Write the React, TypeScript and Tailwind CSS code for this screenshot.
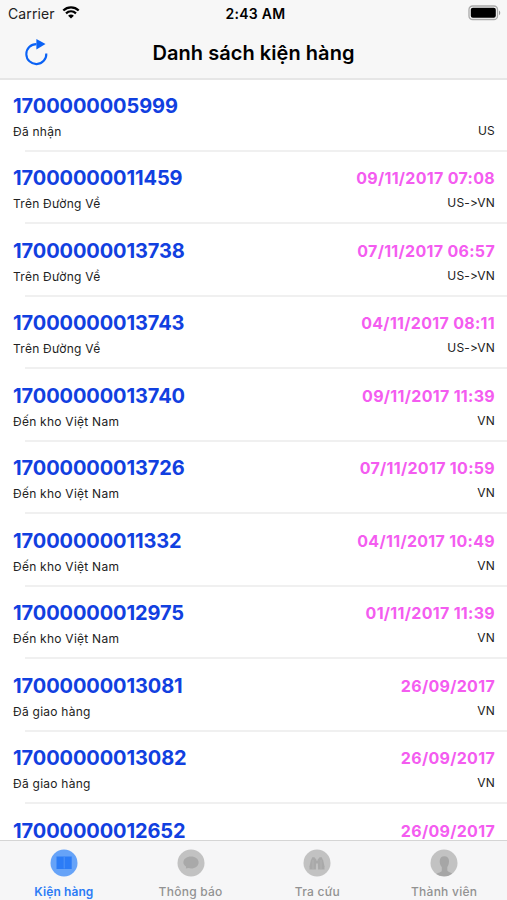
interface Parcel {
  code: string;
  status?: string;
  date?: string;
  route?: string;
}

const parcels: Parcel[] = [
  { code: "1700000005999", status: "Đã nhận", route: "US" },
  { code: "17000000011459", status: "Trên Đường Về", date: "09/11/2017 07:08", route: "US->VN" },
  { code: "17000000013738", status: "Trên Đường Về", date: "07/11/2017 06:57", route: "US->VN" },
  { code: "17000000013743", status: "Trên Đường Về", date: "04/11/2017 08:11", route: "US->VN" },
  { code: "17000000013740", status: "Đến kho Việt Nam", date: "09/11/2017 11:39", route: "VN" },
  { code: "17000000013726", status: "Đến kho Việt Nam", date: "07/11/2017 10:59", route: "VN" },
  { code: "17000000011332", status: "Đến kho Việt Nam", date: "04/11/2017 10:49", route: "VN" },
  { code: "17000000012975", status: "Đến kho Việt Nam", date: "01/11/2017 11:39", route: "VN" },
  { code: "17000000013081", status: "Đã giao hàng", date: "26/09/2017", route: "VN" },
  { code: "17000000013082", status: "Đã giao hàng", date: "26/09/2017", route: "VN" },
  { code: "17000000012652", date: "26/09/2017" },
];

const tabs = [
  { label: "Kiện hàng", icon: "book" },
  { label: "Thông báo", icon: "chat" },
  { label: "Tra cứu", icon: "search" },
  { label: "Thành viên", icon: "user" },
];

const StatusBar = () => (
  <div className="h-7 shrink-0 grid grid-cols-3 items-center pl-2 pr-1.5 text-[14px]">
    <div className="flex items-center gap-[7px] -mt-0.5 text-[#222]">
      <span className="tracking-[0.1px]">Carrier</span>
      <svg className="-mt-px" width="18" height="13" viewBox="0 0 18 13" fill="none">
        <path d="M1.3 4.5C5.7.3 12.3.3 16.7 4.5" stroke="#000" strokeWidth="2.3" />
        <path d="M4 7.4c2.9-2.7 7.1-2.7 10 0" stroke="#000" strokeWidth="2.2" />
        <path d="M9 12.6 6.1 9.7c1.7-1.5 4.1-1.5 5.8 0z" fill="#000" />
      </svg>
    </div>
    <div className="pl-0.5 -mt-0.5 text-center font-semibold tracking-[0.3px] text-black">2:43 AM</div>
    <div className="flex justify-end -mt-0.5">
      <svg width="33" height="16" viewBox="0 0 33 16">
        <rect x="1" y="1" width="28.5" height="13.5" rx="3.6" fill="#f7f7f7" stroke="#aaa" strokeWidth="1.3" />
        <rect x="2.8" y="2.8" width="25" height="10" rx="2" fill="#000" />
        <path d="M31 5.5c1.7.8 1.7 3.9 0 4.7z" fill="#999" />
      </svg>
    </div>
  </div>
);

const Header = () => (
  <div className="h-[52px] shrink-0 grid grid-cols-[60px_1fr_60px] items-center border-b-2 border-[#e6e6e6]">
    <svg className="ml-6 -mt-0.5" width="25" height="28" viewBox="0 0 25 28" fill="none">
      <path d="M12.4 6.1A10 10 0 1 0 22.3 15.5" stroke="#0a62f5" strokeWidth="2.1" />
      <path d="M12.4 1v10.500L21.500 6z" fill="#0a62f5" />
    </svg>
    <h1 className="-mt-px text-center text-[20px] font-semibold tracking-[0.05px] text-black">
      Danh sách kiện hàng
    </h1>
  </div>
);

const ParcelRow = ({ parcel }: { parcel: Parcel }) => (
  <li className="h-[72.5px] shrink-0 flex flex-col">
    <div className="flex flex-1 justify-between pl-[13px] pr-3">
      <div>
        <div className="mt-[11.7px] h-7 text-[20px] leading-7 font-bold tracking-[-0.1px] text-[#1140e0]">
          {parcel.code}
        </div>
        {parcel.status && (
          <div className="mt-1 text-[12px] leading-4 tracking-[0.25px] text-[#222]">{parcel.status}</div>
        )}
      </div>
      <div className="text-right">
        <div className="mt-[11.7px] h-7 text-[16px] leading-7 font-bold tracking-[0.3px] text-[#f45cf0]">
          {parcel.date}
        </div>
        {parcel.route && (
          <div className="mt-[3px] text-[12px] leading-4 tracking-[0.2px] text-[#222] [font-feature-settings:'calt'_0]">
            {parcel.route}
          </div>
        )}
      </div>
    </div>
    <div className="ml-[25px] h-0.5 -mt-px mb-[0.7px] bg-[#f0f0f0]" />
  </li>
);

const TabIcon = ({ icon }: { icon: string }) => {
  const active = icon === "book";
  return (
    <svg width="28" height="28" viewBox="0 0 28 28">
      <circle cx="14" cy="14" r="13.5" fill={active ? "#66a3f8" : "#c2c2c2"} />
      {icon === "book" && (
        <>
          <path d="M6.500 7.500h15.200v12.500H6.500z" fill="#2c7cf6" />
          <path d="M14.200 8v11.500" stroke="#5b9bf8" strokeWidth=".8" />
        </>
      )}
      {icon === "chat" && (
        <path
          d="M14 7.500c4.300 0 7.600 2.500 7.600 5.900s-3.300 6-7.600 6c-.9 0-1.700-.1-2.500-.3l-2.600.3.100-1.800c-1.500-1.100-2.600-2.400-2.600-4.200 0-3.400 3.300-5.900 7.600-5.900z"
          fill="#a9a9a9"
        />
      )}
      {icon === "search" && (
        <g fill="#a9a9a9">
          <path d="M9.300 8.300h2.200l1.700 2.100-.3 10H6.500v-3.200l1.300-5.800z" />
          <path d="M18.700 8.300h-2.200l-1.700 2.100.3 10h6.400v-3.200l-1.300-5.800z" />
          <path d="M12.500 11.500h3v3h-3z" />
          <path d="M10 11v9M18 11v9" stroke="#bcbcbc" strokeWidth=".6" />
        </g>
      )}
      {icon === "user" && (
        <path
          d="M14.300 7.300c3 0 4.900 2 4.700 5.200-.1 2.500-.8 4.500-1.700 5.600v3.300c.2 1.300 2.800 1.700 5 3A13.500 13.500 0 0 1 6.300 25c2-1.700 5.300-1.600 5.500-3.600v-3.300c-1.200-1.200-2-3.200-2.100-5.600-.1-3.200 1.600-5.200 4.600-5.200z"
          fill="#a6a6a6"
        />
      )}
    </svg>
  );
};

const TabBar = () => (
  <nav className="h-[60px] shrink-0 grid grid-cols-4 border-t border-[#d5d5d5] bg-[#f6f6f7]">
    {tabs.map((tab) => (
      <div key={tab.label} className="flex flex-col items-center pt-2 pl-px">
        <TabIcon icon={tab.icon} />
        <span
          className={
            tab.icon === "book"
              ? "mt-[7px] text-[12px] leading-4 font-semibold tracking-[0.1px] text-[#2c7cf6]"
              : "mt-[7px] text-[12px] leading-4 font-medium tracking-[0.25px] text-[#929292]"
          }
        >
          {tab.label}
        </span>
      </div>
    ))}
  </nav>
);

const App = () => {
  return (
    <div className="h-[900px] w-full flex flex-col overflow-hidden bg-white font-['Inter','Noto_Sans',sans-serif]">
      <div className="shrink-0 bg-[#f7f7f7]">
        <StatusBar />
        <Header />
      </div>
      <ul className="flex-1 min-h-0 overflow-hidden flex flex-col">
        {parcels.map((parcel) => (
          <ParcelRow key={parcel.code} parcel={parcel} />
        ))}
      </ul>
      <TabBar />
    </div>
  );
};

export default App;
